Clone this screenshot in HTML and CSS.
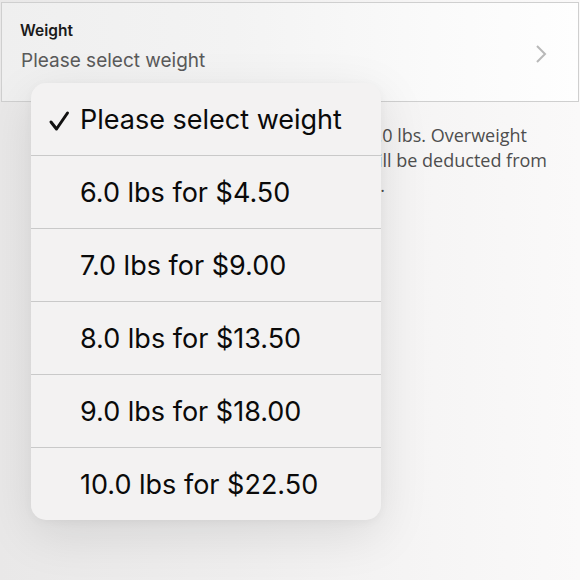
FILE: index.html
```html
<!DOCTYPE html>
<html>
<head>
<meta charset="utf-8">
<link rel="stylesheet" href="styles.css">
</head>
<body>
<div class="page">
  <div class="field">
    <div class="field-text">
      <div class="field-label">Weight</div>
      <div class="field-value">Please select weight</div>
    </div>
    <svg class="chevron" width="14" height="20" viewBox="0 0 14 20"><path d="M3 2 L11 10 L3 18" fill="none" stroke="#b8b8b8" stroke-width="2"/></svg>
  </div>
  <div class="note">
    <div class="note-line l1">Packages may weigh a maximum of 10.0 lbs. Overweight</div>
    <div class="note-line l2">packages will incur a fee that will be deducted from</div>
    <div class="note-line l3">your balance accordingly.</div>
  </div>
  <div class="menu">
    <div class="menu-item">
      <svg class="check" width="22" height="22" viewBox="0 0 22 22"><path d="M3 12 L8.5 19 L19.5 3" fill="none" stroke="#111" stroke-width="3" stroke-linecap="round" stroke-linejoin="round"/></svg>
      <span>Please select weight</span>
    </div>
    <div class="menu-item"><span>6.0 lbs for $4.50</span></div>
    <div class="menu-item"><span>7.0 lbs for $9.00</span></div>
    <div class="menu-item"><span>8.0 lbs for $13.50</span></div>
    <div class="menu-item"><span>9.0 lbs for $18.00</span></div>
    <div class="menu-item"><span>10.0 lbs for $22.50</span></div>
  </div>
</div>
</body>
</html>
```
FILE: styles.css
```css
html, body {
  margin: 0;
  padding: 0;
}
body {
  width: 580px;
  height: 580px;
  overflow: hidden;
  background: linear-gradient(90deg, #e9e8e8 0%, #efeeee 40%, #f6f5f5 75%, #faf9f9 100%);
  font-family: "Open Sans", sans-serif;
}
.page {
  position: relative;
  padding-top: 2px;
  height: 578px;
}
.field {
  margin: 0 1px;
  height: 100px;
  border: 1px solid #cfcfcf;
  background: linear-gradient(90deg, #efefef 0%, #f3f3f3 40%, #fafafa 75%, #fefefe 100%);
  display: flex;
  align-items: center;
  justify-content: space-between;
  padding: 0 30px 0 18px;
  box-sizing: border-box;
}
.field-text {
  display: flex;
  flex-direction: column;
  gap: 9px;
  padding-bottom: 12px;
}
.field-label {
  font-family: "Inter", sans-serif;
  font-weight: 600;
  font-size: 15.5px;
  color: #1a1a1a;
}
.field-value {
  font-family: "Inter", sans-serif;
  font-size: 19px;
  color: #5a5a5a;
  padding-left: 1px;
}
.chevron {
  margin-top: 4px;
}
.note {
  padding: 21px 33px 0 20px;
  font-size: 18px;
  line-height: 25px;
  color: #4e4e4e;
  white-space: nowrap;
  text-align: right;
}
.note-line.l1 {
  padding-right: 20px;
}
.note-line.l3 {
  padding-right: 162px;
}
.menu {
  position: absolute;
  left: 31px;
  top: 83px;
  width: 350px;
  border-radius: 15px;
  background: #f3f2f2;
  box-shadow: 0 14px 50px rgba(0, 0, 0, 0.10), 0 2px 10px rgba(0, 0, 0, 0.04);
  overflow: hidden;
  font-family: "Inter", sans-serif;
}
.menu-item {
  height: 73px;
  display: flex;
  align-items: center;
  padding-left: 49px;
  position: relative;
  font-size: 27px;
  color: #0a0a0a;
  box-sizing: border-box;
  border-top: 1px solid #c9c9c9;
}
.menu-item:first-child {
  border-top: none;
  height: 72px;
}
.check {
  position: absolute;
  left: 17px;
  top: 27px;
}
```
